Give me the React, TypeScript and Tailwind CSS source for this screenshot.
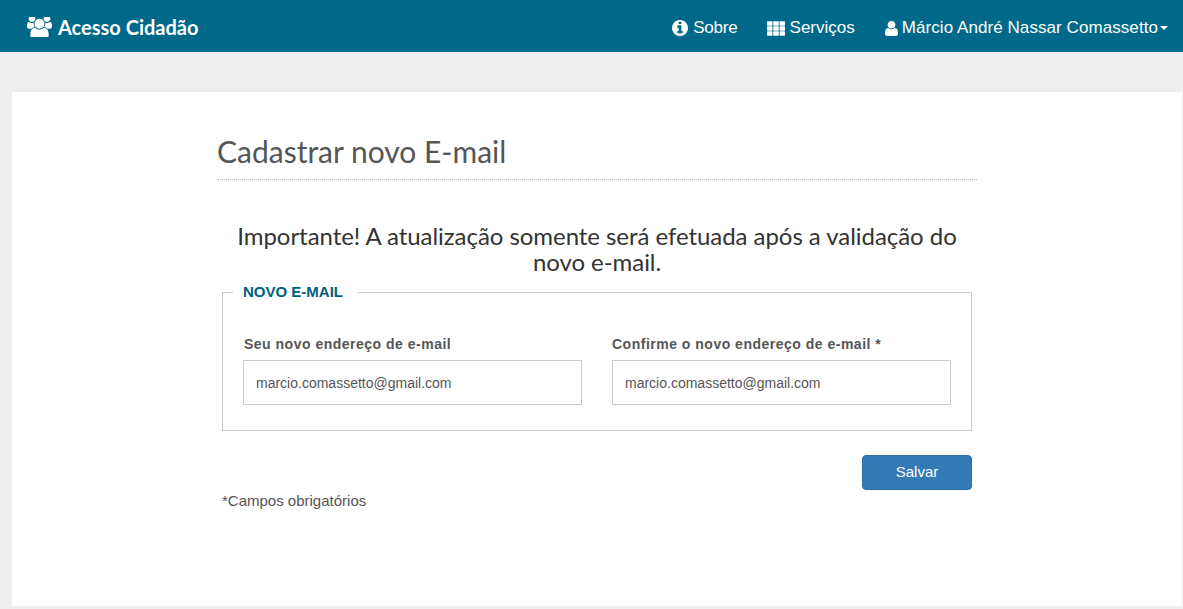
const arial = "font-['Liberation_Sans',Arial,sans-serif]"

function UsersIcon() {
  return (
    <svg viewBox="0 128 1920 1536" className="h-[20px] w-[25px] fill-white">
      <path d="M593 896q-162 5-265 128h-134q-82 0-138-40.5t-56-118.5q0-353 124-353 6 0 43.5 21t97.5 42.5 119 21.5q67 0 133-23-5 37-5 66 0 139 81 256zm1071 637q0 120-73 189.5t-194 69.5h-874q-121 0-194-69.5t-73-189.5q0-53 3.5-103.5t14-109 26.5-108.5 43-97.5 62-81 85.5-53.5 111.5-20q10 0 43 21.5t73 48 107 48 135 21.5 135-21.5 107-48 73-48 43-21.5q61 0 111.5 20t85.5 53.5 62 81 43 97.5 26.5 108.5 14 109 3.5 103.5zm-1024-1277q0 106-75 181t-181 75-181-75-75-181 75-181 181-75 181 75 75 181zm704 384q0 159-112.5 271.5t-271.5 112.5-271.5-112.5-112.5-271.5 112.5-271.5 271.5-112.5 271.5 112.5 112.5 271.5zm576 225q0 78-56 118.5t-138 40.5h-134q-103-123-265-128 81-117 81-256 0-29-5-66 66 23 133 23 59 0 119-21.5t97.5-42.5 43.5-21q124 0 124 353zm-128-609q0 106-75 181t-181 75-181-75-75-181 75-181 181-75 181 75 75 181z" />
    </svg>
  )
}

function InfoIcon() {
  return (
    <svg viewBox="128 128 1536 1536" className="h-[16px] w-[16px] fill-white">
      <path d="M1152 1376v-160q0-14-9-23t-23-9h-96v-512q0-14-9-23t-23-9h-320q-14 0-23 9t-9 23v160q0 14 9 23t23 9h96v320h-96q-14 0-23 9t-9 23v160q0 14 9 23t23 9h448q14 0 23-9t9-23zm-128-896v-160q0-14-9-23t-23-9h-192q-14 0-23 9t-9 23v160q0 14 9 23t23 9h192q14 0 23-9t9-23zm640 416q0 209-103 385.5t-279.5 279.5-385.5 103-385.5-103-279.5-279.5-103-385.5 103-385.5 279.5-279.5 385.5-103 385.5 103 279.5 279.5 103 385.5z" />
    </svg>
  )
}

function GridIcon() {
  const cells = [0, 6.25, 12.5]
  return (
    <svg viewBox="0 0 18 14.5" className="h-[15px] w-[18px] fill-white">
      {cells.map((x) =>
        [0, 5, 10].map((y) => <rect key={`${x}-${y}`} x={x} y={y} width="5.5" height="4.4" rx="0.6" />),
      )}
    </svg>
  )
}

function UserIcon() {
  return (
    <svg viewBox="256 128 1280 1536" className="h-[15px] w-[13px] fill-white" preserveAspectRatio="none">
      <path d="M1536 1399q0 109-62.5 187t-150.5 78h-854q-88 0-150.5-78t-62.5-187q0-85 8.5-160.5t31.5-152 58.5-131 94-89 134.5-34.5q131 128 313 128t313-128q76 0 134.5 34.5t94 89 58.5 131 31.5 152 8.5 160.5zm-256-887q0 159-112.5 271.5t-271.5 112.5-271.5-112.5-112.5-271.5 112.5-271.5 271.5-112.5 271.5 112.5 112.5 271.5z" />
    </svg>
  )
}

function NavItem({ icon, label, className }: { icon: React.ReactNode; label: string; className?: string }) {
  return (
    <a className={`flex items-center text-[17px] text-white ${className ?? ""}`}>
      {icon}
      <span>{label}</span>
    </a>
  )
}

function Field({ label, value, labelClass }: { label: string; value: string; labelClass?: string }) {
  return (
    <div className="w-[339px]">
      <label className={`block text-[14px] leading-[20px] font-bold tracking-[0.5px] text-[#555] ${labelClass ?? ""}`}>
        {label}
      </label>
      <input
        readOnly
        value={value}
        className="mt-[6px] block h-[45px] w-full border border-[#ccc] bg-white px-3 pt-[2px] text-[14px] text-[#555] outline-none"
      />
    </div>
  )
}

export default function App() {
  return (
    <div className={`flex h-[609px] flex-col overflow-hidden bg-[#eee] ${arial}`}>
      {/* Navbar */}
      <header className="flex h-[52px] shrink-0 items-center justify-between bg-[#006989] pt-[2px] pr-[15px] pl-[27px]">
        <div className="flex items-center gap-[6px]">
          <UsersIcon />
          <span className="font-['Lato',sans-serif] text-[20px] font-bold text-white">Acesso Cidadão</span>
        </div>
        <nav className="mt-[2px] flex items-center">
          <NavItem icon={<InfoIcon />} label="Sobre" className="mr-[29px] gap-[5px] tracking-[-0.2px]" />
          <NavItem icon={<GridIcon />} label="Serviços" className="mr-[30px] gap-[5px]" />
          <NavItem icon={<UserIcon />} label="Márcio André Nassar Comassetto" className="gap-[4px] tracking-[0.07px]" />
          <span className="ml-[2px] h-0 w-0 border-x-[4px] border-t-[4px] border-x-transparent border-t-white" />
        </nav>
      </header>

      {/* Card */}
      <main className="mt-[40px] mr-px ml-[12px] h-[514px] bg-white pt-[41px] pl-[205px]">
        <div className="w-[760px]">
          <h1 className="border-b border-dotted border-[#bbb] pb-[9px] font-['Lato',sans-serif] text-[30px] leading-[37px] text-[#555]">
            Cadastrar novo E-mail
          </h1>

          <p className="mx-auto mt-[43px] w-[740px] text-center font-['Lato',sans-serif] text-[24px] leading-[26.4px] tracking-[-0.05px] text-[#333]">
            Importante! A atualização somente será efetuada após a validação do novo e-mail.
          </p>

          <fieldset className="mx-[5px] mt-[6.7px] h-[148.3px] border border-[#ccc] px-[20px]">
            <legend className="-ml-[10px] pr-[15px] pb-[2px] pl-[10px] text-[15px] leading-[18px] font-bold text-[#005f7f]">
              NOVO E-MAIL
            </legend>
            <div className="mt-[31px] flex justify-between">
              <Field label="Seu novo endereço de e-mail" value="marcio.comassetto@gmail.com" labelClass="pl-px" />
              <Field label="Confirme o novo endereço de e-mail *" value="marcio.comassetto@gmail.com" />
            </div>
          </fieldset>

          <div className="mx-[5px] mt-[24px] flex items-start justify-between">
            <p className="mt-[36px] text-[15px] leading-[20px] text-[#555]">*Campos obrigatórios</p>
            <button className="h-[35px] w-[110px] rounded-[4px] border border-[#2e6da4] bg-[#337ab7] text-[15px] text-white">
              Salvar
            </button>
          </div>
        </div>
      </main>
    </div>
  )
}
